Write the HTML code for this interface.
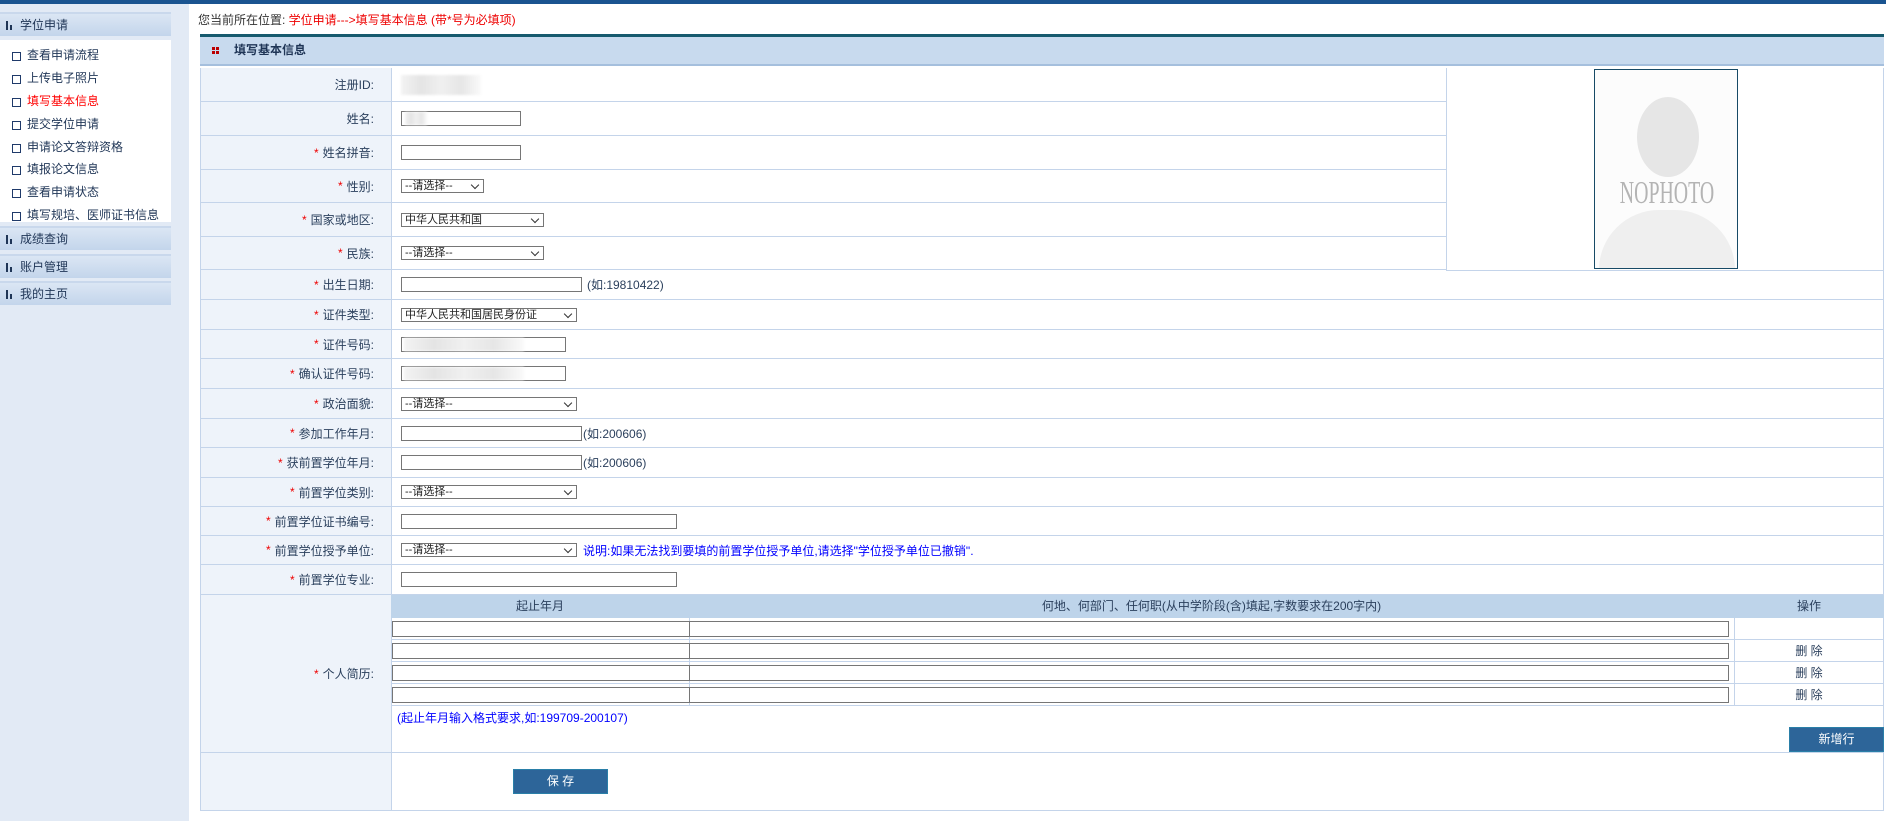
<!DOCTYPE html>
<html><head><meta charset="utf-8"><style>
*{box-sizing:border-box;margin:0;padding:0}
body{width:1886px;height:821px;background:#fff;font:12px "Liberation Sans","Noto Sans CJK SC",sans-serif;color:#2a3f5c;position:relative;overflow:hidden}
.topbar{position:absolute;left:0;top:0;width:1886px;height:4px;background:#1a5490}
.side{position:absolute;left:0;top:4px;width:189px;height:817px;background:#e2eaf5}
.sh{position:absolute;left:0;width:171px;height:24px;background:linear-gradient(#dbe6f4,#c3d5eb);border-top:2px solid #c9d8ec;color:#1f3556;font-size:12px;line-height:22px;padding-left:20px}
.sh i{position:absolute;left:6px;top:7px;width:6px;height:9px;border-left:2px solid #1f3556;}
.sh i:after{content:"";position:absolute;left:2px;top:4px;width:2px;height:5px;background:#1f3556}
.items{position:absolute;left:0;top:40px;width:171px;height:182px;background:#fff}
.it{position:absolute;left:12px;font-size:12px;color:#1f3556;line-height:14px;padding-left:15px}
.it:before{content:"";position:absolute;left:0;top:4px;width:7px;height:7px;border:1.5px solid #1f3a6a}
.it.red{color:#f00}
.crumb{position:absolute;left:198px;top:11px;font-size:12px;color:#333}
.crumb span{color:#e00}
.hdr{position:absolute;left:200px;top:34px;width:1684px;height:32px;background:#c8daee;border-top:3px solid #175a6e;border-bottom:2px solid #a5bfdd;font-weight:bold;font-size:12px;color:#1f3556;line-height:27px;padding-left:34px}
.hdr b{position:absolute;left:12px;top:10px;width:7px;height:7px;background:
linear-gradient(90deg,#b00 0 3px,transparent 3px 4px,#b00 4px) ;}
.hdr b:after{content:"";position:absolute;left:0;top:3px;width:7px;height:1px;background:#c8daee}
.row{position:absolute;left:200px;width:1684px;border-bottom:1px solid #c4d4ea;border-left:1px solid #c4d4ea;border-right:1px solid #c4d4ea}
.lb{position:absolute;left:0;top:0;bottom:0;width:191px;background:#eef3fa;border-right:1px solid #c4d4ea;text-align:right;padding-right:17px;display:flex;align-items:center;justify-content:flex-end}
.lb s{text-decoration:none;color:#e00;margin-right:4px}
.ct{position:absolute;left:200px;top:0;bottom:0;display:flex;align-items:center;white-space:nowrap}
.inp{height:15px;border:1px solid #767676;background:#fff;display:inline-block}
.sel{height:14px;border:1px solid #767676;background:#fff;display:inline-block;font-size:11px;line-height:12px;padding-left:3px;position:relative;color:#222}
.sel:after{content:"";position:absolute;right:5px;top:2px;width:5px;height:5px;border-right:1.5px solid #333;border-bottom:1.5px solid #333;transform:rotate(45deg)}
.note{color:#2a3f5c;margin-left:5px}
.blue{color:#00f}
.blur{display:inline-block;height:14px;background:linear-gradient(90deg,#f3f3f3,#e4e4e4,#f0f0f0,#e6e6e6,#fafafa);filter:blur(1px)}
.photo{position:absolute;left:1446px;top:68px;width:438px;height:203px;background:#fff;border-right:1px solid #c4d4ea;border-left:1px solid #c4d4ea;border-bottom:1px solid #c4d4ea}
.pf{position:absolute;left:147px;top:1px;width:144px;height:200px;border:1.5px solid #174a66;background:#fcfcfc;overflow:hidden}
.head{position:absolute;left:42px;top:27px;width:62px;height:80px;border-radius:50%;background:#e6e6e6}
.body{position:absolute;left:4px;top:140px;width:136px;height:90px;border-radius:60px 60px 0 0;background:#efefef}
.nop{position:absolute;left:-20px;width:184px;top:104px;text-align:center;font:32px "Liberation Serif",serif;color:#b4b4b4;transform:scaleX(0.62);letter-spacing:0}
.sub{position:absolute;left:391px;top:595px;width:1493px}
.sth{position:absolute;top:0;height:23px;background:#bed4ea;line-height:23px;text-align:center;font-size:12px;color:#2a3f5c}
.sr{position:absolute;left:0;width:1493px;height:22px;border-bottom:1px solid #c4d4ea}
.btn{position:absolute;background:#2d6599;color:#fff;text-align:center;font-size:12px;border:1px solid #2a7fa8}
</style></head><body>
<div class="topbar"></div>
<div class="side">
<div class="sh" style="top:8px"><i></i>学位申请</div>
<div class="items" style="top:36px">
<div class="it" style="top:8px">查看申请流程</div>
<div class="it" style="top:31px">上传电子照片</div>
<div class="it red" style="top:54px">填写基本信息</div>
<div class="it" style="top:77px">提交学位申请</div>
<div class="it" style="top:100px">申请论文答辩资格</div>
<div class="it" style="top:122px">填报论文信息</div>
<div class="it" style="top:145px">查看申请状态</div>
<div class="it" style="top:168px">填写规培、医师证书信息</div>
</div>
<div class="sh" style="top:222px"><i></i>成绩查询</div>
<div class="sh" style="top:250px"><i></i>账户管理</div>
<div class="sh" style="top:277px"><i></i>我的主页</div>
</div>
<div class="crumb">您当前所在位置: <span>学位申请---&gt;填写基本信息 (带*号为必填项)</span></div>
<div class="hdr"><b></b>填写基本信息</div>

<div class="row" style="top:68px;height:34px"><div class="lb">注册ID:</div><div class="ct"><span class="blur" style="width:80px;height:20px"></span></div></div>
<div class="row" style="top:102px;height:34px"><div class="lb">姓名:</div><div class="ct"><span class="inp" style="width:120px;position:relative"><span class="blur" style="position:absolute;left:3px;top:0;width:22px;height:13px"></span></span></div></div>
<div class="row" style="top:136px;height:34px"><div class="lb"><s>*</s>姓名拼音:</div><div class="ct"><span class="inp" style="width:120px"></span></div></div>
<div class="row" style="top:170px;height:33px"><div class="lb"><s>*</s>性别:</div><div class="ct"><span class="sel" style="width:83px">--请选择--</span></div></div>
<div class="row" style="top:203px;height:34px"><div class="lb"><s>*</s>国家或地区:</div><div class="ct"><span class="sel" style="width:143px">中华人民共和国</span></div></div>
<div class="row" style="top:237px;height:33px"><div class="lb"><s>*</s>民族:</div><div class="ct"><span class="sel" style="width:143px">--请选择--</span></div></div>
<div class="photo"><div class="pf"><div class="head"></div><div class="body"></div><div class="nop">NOPHOTO</div></div></div>

<div class="row" style="top:270px;height:30px"><div class="lb"><s>*</s>出生日期:</div><div class="ct"><span class="inp" style="width:181px"></span><span class="note">(如:19810422)</span></div></div>
<div class="row" style="top:300px;height:30px"><div class="lb"><s>*</s>证件类型:</div><div class="ct"><span class="sel" style="width:176px">中华人民共和国居民身份证</span></div></div>
<div class="row" style="top:330px;height:29px"><div class="lb"><s>*</s>证件号码:</div><div class="ct"><span class="inp" style="width:165px;position:relative"><span class="blur" style="position:absolute;left:2px;top:0;width:120px;height:13px"></span></span></div></div>
<div class="row" style="top:359px;height:30px"><div class="lb"><s>*</s>确认证件号码:</div><div class="ct"><span class="inp" style="width:165px;position:relative"><span class="blur" style="position:absolute;left:2px;top:0;width:120px;height:13px"></span></span></div></div>
<div class="row" style="top:389px;height:30px"><div class="lb"><s>*</s>政治面貌:</div><div class="ct"><span class="sel" style="width:176px">--请选择--</span></div></div>
<div class="row" style="top:419px;height:29px"><div class="lb"><s>*</s>参加工作年月:</div><div class="ct"><span class="inp" style="width:181px"></span><span class="note" style="margin-left:1px">(如:200606)</span></div></div>
<div class="row" style="top:448px;height:30px"><div class="lb"><s>*</s>获前置学位年月:</div><div class="ct"><span class="inp" style="width:181px"></span><span class="note" style="margin-left:1px">(如:200606)</span></div></div>
<div class="row" style="top:478px;height:29px"><div class="lb"><s>*</s>前置学位类别:</div><div class="ct"><span class="sel" style="width:176px">--请选择--</span></div></div>
<div class="row" style="top:507px;height:29px"><div class="lb"><s>*</s>前置学位证书编号:</div><div class="ct"><span class="inp" style="width:276px"></span></div></div>
<div class="row" style="top:536px;height:29px"><div class="lb"><s>*</s>前置学位授予单位:</div><div class="ct"><span class="sel" style="width:176px">--请选择--</span><span class="blue" style="margin-left:6px">说明:如果无法找到要填的前置学位授予单位,请选择"学位授予单位已撤销".</span></div></div>
<div class="row" style="top:565px;height:30px"><div class="lb"><s>*</s>前置学位专业:</div><div class="ct"><span class="inp" style="width:276px"></span></div></div>
<div class="row" style="top:595px;height:158px"><div class="lb"><s>*</s>个人简历:</div></div>
<div class="row" style="top:753px;height:58px"><div class="lb"></div></div>

<div class="sub">
<div class="sth" style="left:0;width:298px">起止年月</div>
<div class="sth" style="left:298px;width:1045px">何地、何部门、任何职(从中学阶段(含)填起,字数要求在200字内)</div>
<div class="sth" style="left:1343px;width:150px">操作</div>
<div class="sr" style="top:23px"></div><div class="sr" style="top:45px"></div><div class="sr" style="top:67px"></div><div class="sr" style="top:89px"></div>
<div style="position:absolute;left:298px;top:23px;width:1px;height:88px;background:#c4d4ea"></div>
<div style="position:absolute;left:1343px;top:23px;width:1px;height:88px;background:#c4d4ea"></div>
<div class="inp" style="position:absolute;left:1px;top:26px;width:298px;height:16px"></div><div class="inp" style="position:absolute;left:298px;top:26px;width:1040px;height:16px"></div>
<div class="inp" style="position:absolute;left:1px;top:48px;width:298px;height:16px"></div><div class="inp" style="position:absolute;left:298px;top:48px;width:1040px;height:16px"></div>
<div class="inp" style="position:absolute;left:1px;top:70px;width:298px;height:16px"></div><div class="inp" style="position:absolute;left:298px;top:70px;width:1040px;height:16px"></div>
<div class="inp" style="position:absolute;left:1px;top:92px;width:298px;height:16px"></div><div class="inp" style="position:absolute;left:298px;top:92px;width:1040px;height:16px"></div>
<div style="position:absolute;left:1343px;width:150px;top:46px;text-align:center;line-height:20px">删 除</div>
<div style="position:absolute;left:1343px;width:150px;top:68px;text-align:center;line-height:20px">删 除</div>
<div style="position:absolute;left:1343px;width:150px;top:90px;text-align:center;line-height:20px">删 除</div>
<div class="blue" style="position:absolute;left:6px;top:114px">(起止年月输入格式要求,如:199709-200107)</div>
</div>
<div class="btn" style="left:1789px;top:727px;width:95px;height:25px;line-height:23px">新增行</div>
<div class="btn" style="left:513px;top:769px;width:95px;height:25px;line-height:23px">保 存</div>
</body></html>
